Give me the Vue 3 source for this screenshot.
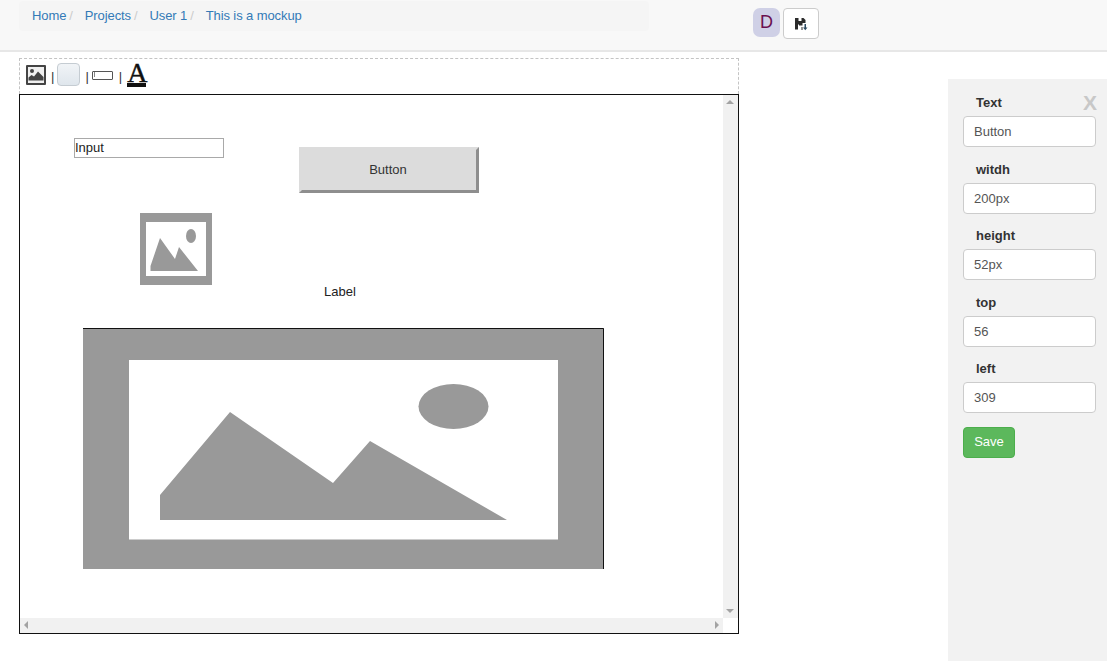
<script setup>
import { ref } from 'vue'

const crumbs = ['Home', 'Projects', 'User 1', 'This is a mockup']

const fields = ref([
  { label: 'Text', value: 'Button' },
  { label: 'witdh', value: '200px' },
  { label: 'height', value: '52px' },
  { label: 'top', value: '56' },
  { label: 'left', value: '309' }
])
</script>

<template>
  <div class="page">
    <header class="topbar">
      <ol class="breadcrumb">
        <li v-for="(crumb, index) in crumbs" :key="crumb" class="crumb">
          <a href="#">{{ crumb }}</a>
          <span v-if="index < crumbs.length - 1" class="sep">/</span>
        </li>
      </ol>
      <div class="user-tools">
        <span class="avatar">D</span>
        <button class="save-icon" aria-label="Save project">
          <svg width="14" height="14" viewBox="0 0 14 14">
            <path fill="#2b2b2b" d="M1 1h3.500v3h3v-3h2l2 2v3h-3v2.500h-3.500v-1h-1v5h-3z" />
            <path fill="#2b2b2b" d="M7.500 10h1v3h-1z" />
            <path fill="#2b4a60" d="M10.500 7h1.500v3.500h1.500l-2.250 2.800-2.250-2.800h1.500z" />
          </svg>
        </button>
      </div>
    </header>

    <main class="workspace">
      <section class="editor">
        <div class="toolbar">
          <svg class="tool" width="20" height="20" viewBox="0 0 20 20">
            <rect width="20" height="20" rx="1" fill="#444" />
            <rect x="2" y="2" width="16" height="16" fill="#f0f0f0" />
            <circle cx="6" cy="6" r="2" fill="#444" />
            <path fill="#444" d="M2.500 15.500v-3l3-2.500 2.500 1.500 4-5 5.500 5.500v3.500z" />
          </svg>
          <span class="bar">|</span>
          <span class="tool-button"></span>
          <span class="bar">|</span>
          <span class="tool-input"><i></i></span>
          <span class="bar">|</span>
          <span class="tool-text">A</span>
        </div>

        <div class="canvas">
          <div class="canvas-area">
            <input class="mock-input" value="Input" readonly />
            <button class="mock-button">Button</button>
            <svg class="mock-image small" viewBox="0 0 72 72">
              <rect width="72" height="72" fill="#999" />
              <rect x="6" y="9" width="60" height="54" fill="#fff" />
              <ellipse cx="51" cy="23" rx="5" ry="7" fill="#999" />
              <path fill="#999" d="M10.500 58v-5l9.500-28 15 21 4-12 19 24z" />
            </svg>
            <span class="mock-label">Label</span>
            <svg class="mock-image big" viewBox="0 0 521 241" preserveAspectRatio="none">
              <rect width="521" height="241" fill="#999" />
              <path d="M0 .5h520.500v240.500" fill="none" stroke="#111" />
              <rect x="46" y="32" width="429" height="179.500" fill="#fff" />
              <ellipse cx="370.500" cy="78.500" rx="35" ry="22.500" fill="#999" />
              <path fill="#999" d="M77 192v-25l70-83 103 71 37-42 137 79z" />
            </svg>
          </div>
          <div class="scroll-y">
            <span class="arrow up"></span>
            <span class="arrow down"></span>
          </div>
          <div class="scroll-x">
            <span class="arrow left"></span>
            <span class="arrow right"></span>
          </div>
        </div>
      </section>

      <aside class="panel">
        <span class="close">X</span>
        <div v-for="field in fields" :key="field.label" class="field">
          <label>{{ field.label }}</label>
          <input v-model="field.value" />
        </div>
        <button class="save">Save</button>
      </aside>
    </main>
  </div>
</template>

<style>
html, body {
  margin: 0;
  background: #fff;
  overflow: hidden;
}
</style>

<style scoped>
.page {
  width: 1107px;
  height: 661px;
  overflow: hidden;
  font-family: "Liberation Sans", Arial, sans-serif;
  font-size: 13px;
  color: #333;
}

/* --- barra de arriba --- */
.topbar {
  height: 49px;
  background: #f8f8f8;
  border-bottom: 2px solid #e7e7e7;
  display: flex;
  padding: 1px 0 0 19px;
  box-sizing: content-box;
}

.breadcrumb {
  width: 630px;
  height: 30px;
  margin: 0;
  padding: 7px 13px 0;
  box-sizing: border-box;
  background: #f5f5f5;
  border-radius: 4px;
  list-style: none;
  display: flex;
  line-height: 15px;
  letter-spacing: -0.1px;
}

.crumb a {
  color: #337ab7;
  text-decoration: none;
}

.sep {
  color: #ccc;
  padding: 0 12px 0 3px;
}

.user-tools {
  margin-left: 104px;
  padding-top: 7px;
  display: flex;
  gap: 3px;
}

.avatar {
  width: 27px;
  height: 29px;
  border-radius: 7px;
  background: #cfd0e6;
  color: #6a0f4f;
  font-size: 18px;
  line-height: 29px;
  text-align: center;
}

.save-icon {
  width: 36px;
  height: 31px;
  padding: 0;
  background: #fff;
  border: 1px solid #ccc;
  border-radius: 4px;
  display: flex;
  align-items: center;
  justify-content: center;
}

/* --- zona de trabajo --- */
.workspace {
  display: flex;
  justify-content: space-between;
}

.editor {
  width: 720px;
  margin: 6px 0 0 19px;
}

.toolbar {
  height: 36px;
  box-sizing: border-box;
  border: 1px dashed #c4c4c4;
  border-bottom: 0;
  padding: 0 0 4px 6px;
  display: flex;
  align-items: center;
}

.bar {
  color: #333;
  font-size: 13px;
  margin: 4px 3px 0 5px;
}

.tool-button {
  width: 23px;
  height: 23px;
  box-sizing: border-box;
  border: 1px solid #c5ccd2;
  border-radius: 4px;
  background: linear-gradient(#f1f4f7, #dfe6ec);
}

.tool-input {
  width: 21px;
  height: 9px;
  box-sizing: border-box;
  border: 1.5px solid #555;
  border-radius: 1px;
  background: #fff;
  position: relative;
  margin: 1px 1px 0 0;
}

.tool-input i {
  position: absolute;
  left: 1px;
  top: 0;
  width: 1px;
  height: 5px;
  background: #888;
}

.tool-text {
  font-family: "Liberation Serif", serif;
  font-size: 28px;
  line-height: 20px;
  color: #111;
  -webkit-text-stroke: 0.4px #111;
  border-bottom: 4px solid #111;
  width: 19px;
  text-align: center;
  margin: 0 0 0 2px;
}

.canvas {
  height: 540px;
  box-sizing: border-box;
  border: 1px solid #111;
  display: grid;
  grid-template-columns: 703px 15px;
  grid-template-rows: 523px 15px;
}

.canvas-area {
  position: relative;
  overflow: hidden;
}

/* estos elementos van colocados libremente sobre el lienzo */
.mock-input {
  position: absolute;
  left: 54px;
  top: 43px;
  width: 150px;
  height: 20px;
  box-sizing: border-box;
  padding: 0 0 2px;
  border: 1px solid #a9a9a9;
  font: 13px "Liberation Sans", Arial, sans-serif;
  color: #222;
  outline: none;
}

.mock-button {
  position: absolute;
  left: 279px;
  top: 52px;
  width: 180px;
  height: 46px;
  box-sizing: border-box;
  background: #dcdcdc;
  border: 3px solid;
  border-color: #dcdcdc #8e8e8e #8e8e8e #dcdcdc;
  font: 13px "Liberation Sans", Arial, sans-serif;
  color: #333;
  padding: 0 2px 2px 0;
}

.mock-image {
  position: absolute;
  display: block;
}

.mock-image.small {
  left: 120px;
  top: 118px;
  width: 72px;
  height: 72px;
}

.mock-image.big {
  left: 63px;
  top: 233px;
  width: 521px;
  height: 241px;
}

.mock-label {
  position: absolute;
  left: 304px;
  top: 189px;
  color: #222;
  line-height: 15px;
}

/* --- barras de scroll --- */
.scroll-y,
.scroll-x {
  background: #f1f1f1;
  position: relative;
}

.scroll-y {
  grid-column: 2;
  grid-row: 1;
}

.scroll-x {
  grid-column: 1;
  grid-row: 2;
}

.arrow {
  position: absolute;
  width: 0;
  height: 0;
  border: 4px solid transparent;
}

.arrow.up {
  top: 1px;
  left: 3px;
  border-bottom-color: #a3a3a3;
}

.arrow.down {
  bottom: 1px;
  left: 3px;
  border-top-color: #a3a3a3;
}

.arrow.left {
  left: 0;
  top: 3px;
  border-right-color: #a3a3a3;
}

.arrow.right {
  right: 0;
  top: 3px;
  border-left-color: #a3a3a3;
}

/* --- panel derecho --- */
.panel {
  position: relative;
  width: 159px;
  height: 582px;
  margin-top: 27px;
  box-sizing: border-box;
  background: #f2f2f2;
  padding: 16px 11px 0 15px;
}

.close {
  position: absolute;
  right: 10px;
  top: 12px;
  font-size: 21px;
  font-weight: bold;
  line-height: 24px;
  color: #c8c8c8;
}

.field {
  height: 66.500px;
}

.field label {
  display: block;
  font-weight: bold;
  color: #333;
  line-height: 15px;
  margin: 0 0 6px 13px;
}

.field input {
  display: block;
  width: 133px;
  height: 31px;
  box-sizing: border-box;
  padding: 0 10px;
  background: #fff;
  border: 1px solid #ccc;
  border-radius: 4px;
  font: 13px "Liberation Sans", Arial, sans-serif;
  color: #555;
  outline: none;
}

.save {
  display: block;
  width: 52px;
  height: 31px;
  margin-top: -1px;
  background: #5cb85c;
  border: 1px solid #4cae4c;
  border-radius: 4px;
  color: #fff;
  font: 13px "Liberation Sans", Arial, sans-serif;
  padding: 0 0 2px;
}
</style>
